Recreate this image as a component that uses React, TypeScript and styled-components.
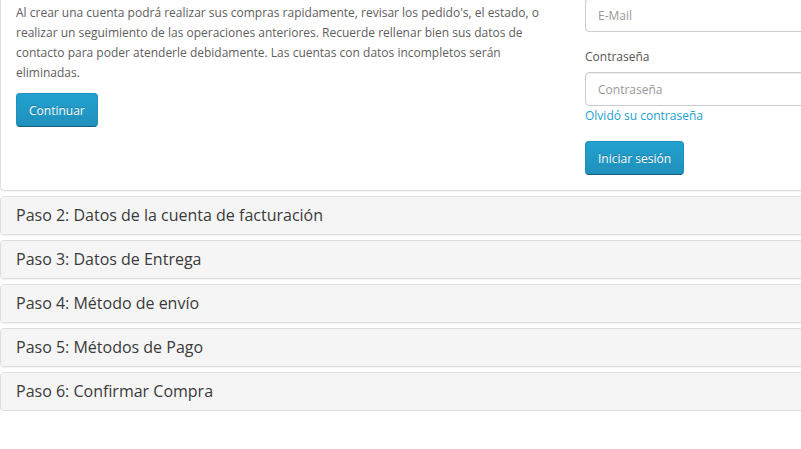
import React from "react";
import styled, { createGlobalStyle } from "styled-components";

const Global = createGlobalStyle`
  html, body { margin: 0; padding: 0; background: #fff; overflow: hidden; }
  body {
    font-family: "Open Sans", "Noto Sans", sans-serif;
    font-size: 12px;
    line-height: 20px;
    color: #666;
  }
  * { box-sizing: border-box; }
`;

const Page = styled.div`
  width: 1140px;
  margin-top: -18px;
`;

const PanelGroup = styled.div`
  display: flex;
  flex-direction: column;
  gap: 5px;
`;

const Panel = styled.div`
  background: #fff;
  border: 1px solid #ddd;
  border-radius: 4px;
  box-shadow: 0 1px 1px rgba(0, 0, 0, 0.05);
  overflow: hidden;
`;

const PanelHeading = styled.div`
  background: #f5f5f5;
  padding: 10px 15px;
`;

const PanelTitle = styled.h4`
  margin: 0;
  font-size: 16px;
  line-height: 17px;
  font-weight: normal;
  color: #3a3a3a;
`;

const PanelBody = styled.div`
  padding: 15px;
  display: grid;
  grid-template-columns: minmax(0, 1fr) minmax(0, 1fr);
  column-gap: 30px;
`;

const Column = styled.div`
  display: flex;
  flex-direction: column;
  align-items: flex-start;
  min-width: 0;
`;

const Text = styled.p`
  margin: 5px 0 10px;
  font-size: 12px;
  color: #5e5e5e;
  white-space: nowrap;
`;

const Button = styled.button`
  font-family: inherit;
  font-size: 12px;
  line-height: 17px;
  padding: 7.5px 12px;
  color: #fff;
  text-shadow: 0 -1px 0 rgba(0, 0, 0, 0.25);
  background-color: #229ac8;
  background-image: linear-gradient(to bottom, #23a1d1, #1f90bb);
  border: 1px solid;
  border-color: #1f90bb #1f90bb #145e7a;
  border-radius: 4px;
  cursor: pointer;
`;

const FormGroup = styled.div`
  display: flex;
  flex-direction: column;
  align-self: stretch;
  margin-bottom: 15px;
`;

const Label = styled.label`
  font-size: 12px;
  line-height: 20px;
  color: #555;
  margin-bottom: 5px;
`;

const Input = styled.input`
  height: 34px;
  padding: 6px 12px;
  font-family: inherit;
  font-size: 12px;
  color: #555;
  border: 1px solid #ccc;
  border-radius: 4px;
  box-shadow: inset 0 1px 1px rgba(0, 0, 0, 0.075);
  &::placeholder { color: #999; }
`;

const Link = styled.a`
  color: #23a1d1;
  text-decoration: none;
  line-height: 20px;
`;

const steps = [
  "Paso 2: Datos de la cuenta de facturación",
  "Paso 3: Datos de Entrega",
  "Paso 4: Método de envío",
  "Paso 5: Métodos de Pago",
  "Paso 6: Confirmar Compra",
];

const lines = [
  "Al crear una cuenta podrá realizar sus compras rapidamente, revisar los pedido's, el estado, o",
  "realizar un seguimiento de las operaciones anteriores. Recuerde rellenar bien sus datos de",
  "contacto para poder atenderle debidamente. Las cuentas con datos incompletos serán",
  "eliminadas.",
];

export default function App() {
  return (
    <>
      <Global />
      <Page>
        <PanelGroup>
          <Panel>
            <PanelBody>
              <Column>
                <Text>
                  {lines.map((l, i) => (
                    <React.Fragment key={i}>
                      {l}
                      {i < lines.length - 1 && <br />}
                    </React.Fragment>
                  ))}
                </Text>
                <Button type="button">Continuar</Button>
              </Column>
              <Column>
                <FormGroup>
                  <Input type="text" placeholder="E-Mail" />
                </FormGroup>
                <FormGroup>
                  <Label>Contraseña</Label>
                  <Input type="password" placeholder="Contraseña" />
                  <Link href="#">Olvidó su contraseña</Link>
                </FormGroup>
                <Button type="button">Iniciar sesión</Button>
              </Column>
            </PanelBody>
          </Panel>
          {steps.map((s) => (
            <Panel key={s}>
              <PanelHeading>
                <PanelTitle>{s}</PanelTitle>
              </PanelHeading>
            </Panel>
          ))}
        </PanelGroup>
      </Page>
    </>
  );
}
